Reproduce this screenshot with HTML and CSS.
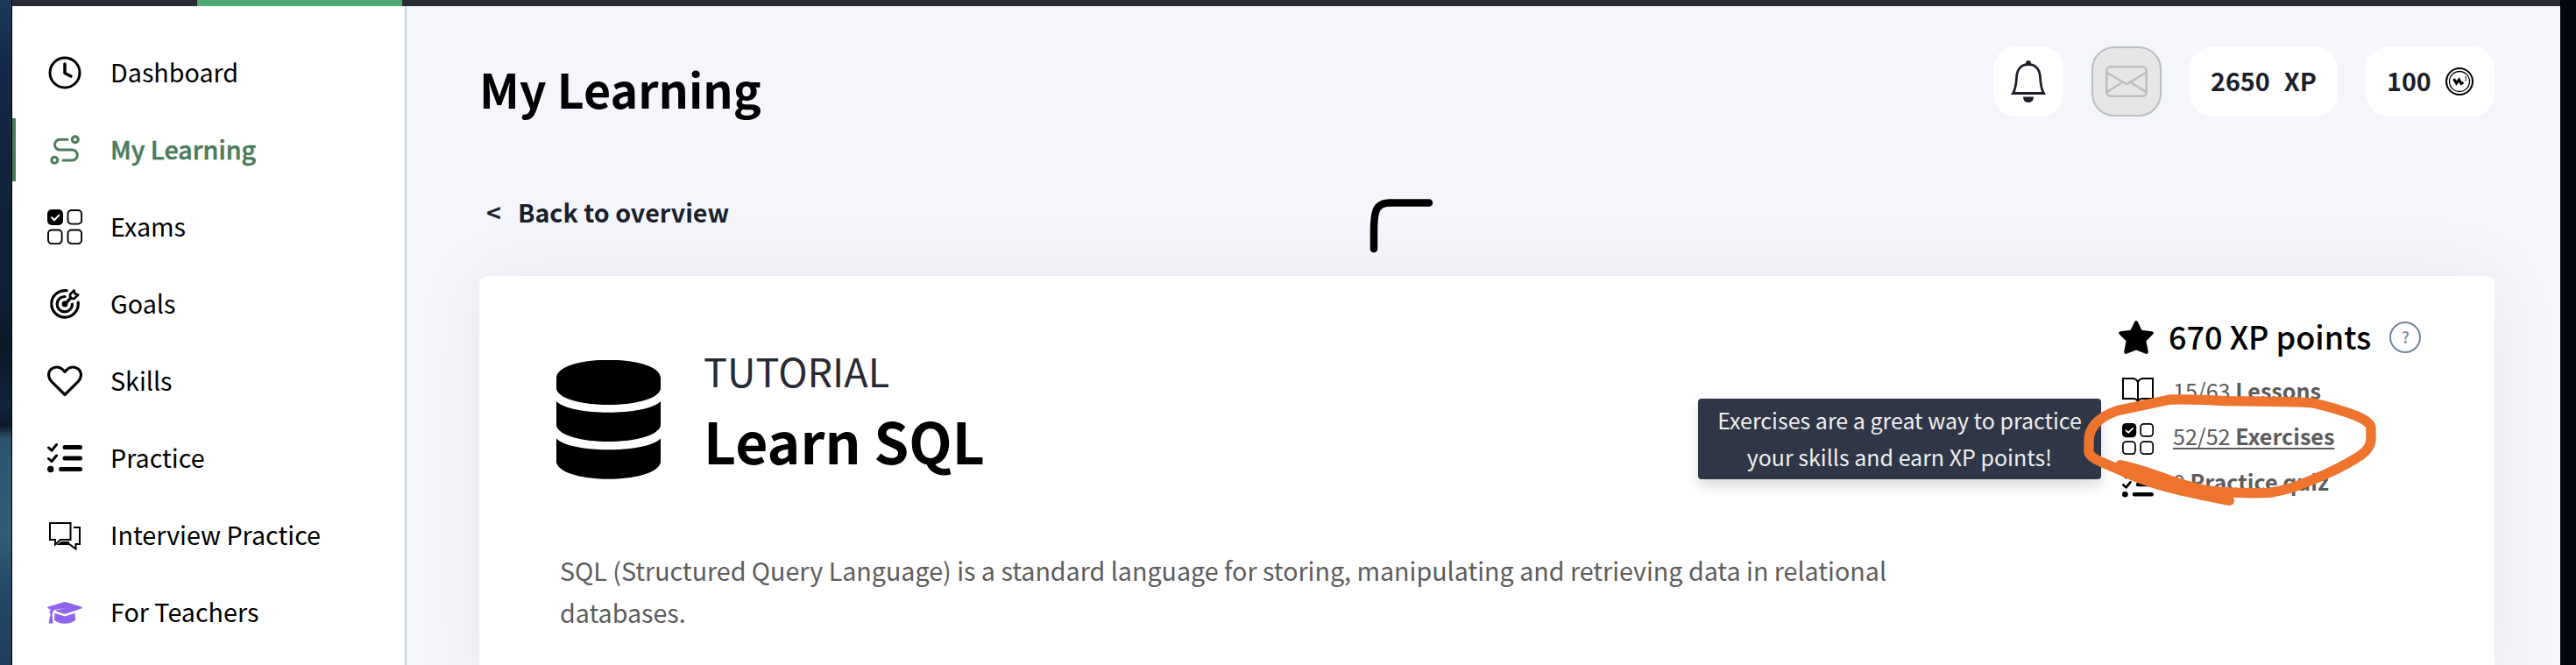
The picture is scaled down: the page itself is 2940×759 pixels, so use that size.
FILE: index.html
```html
<!DOCTYPE html>
<html lang="en">
<head>
<meta charset="utf-8">
<title>My Learning</title>
<link rel="stylesheet" href="styles.css">
</head>
<body>
<svg class="symbols" aria-hidden="true">
  <symbol id="i-grid" viewBox="0 0 40 40">
    <rect x="0" y="0" width="18" height="18" rx="5" fill="#000"/>
    <path d="M5 9.200l3 3 5.400-5.600" fill="none" stroke="#fff" stroke-width="2" stroke-linecap="round" stroke-linejoin="round"/>
    <g fill="none" stroke="#000" stroke-width="1.900">
      <rect x="23.500" y="1" width="15.600" height="15.600" rx="4"/>
      <rect x="1" y="23.500" width="15.600" height="15.600" rx="4"/>
      <rect x="23.500" y="23.500" width="15.600" height="15.600" rx="4"/>
    </g>
  </symbol>
  <symbol id="i-list" viewBox="0 0 40 40">
    <g fill="none" stroke="#000" stroke-linecap="round" stroke-linejoin="round">
      <path d="M1.500 8l3.500 3.200 5.500-6.700M1.500 20.500l3.500 3.200 5.500-6.700" stroke-width="3"/>
      <path d="M20 7.500h17.500M20 20h17.500M15.500 32.500h22" stroke-width="5"/>
    </g>
    <circle cx="3.700" cy="32.500" r="3.700"/>
  </symbol>
</svg>
<div class="wallpaper wallpaper-left"></div>
<div class="window">
  <div class="progress"><span class="progress-done"></span></div>
  <div class="app">
    <nav class="sidebar">
      <a class="nav-item">
        <svg class="icon" viewBox="0 0 40 40" fill="none" stroke="#000" stroke-width="3"><circle cx="20" cy="20" r="17"/><path d="M20 10v10.500l7 3.500" stroke-width="3.500" stroke-linecap="round" stroke-linejoin="round"/></svg>
        <span>Dashboard</span></a>
      <a class="nav-item active">
        <svg class="icon" viewBox="0 0 40 40" fill="none" stroke="#4a7c59" stroke-width="3" stroke-linecap="round"><circle cx="31.800" cy="8.300" r="3.500"/><circle cx="8.300" cy="31.800" r="3.500"/><path d="M23 8.300h-8.600a5.900 5.900 0 0 0 0 11.800h14a5.900 5.900 0 0 1 0 11.800H18"/></svg>
        <span>My Learning</span></a>
      <a class="nav-item"><svg class="icon"><use href="#i-grid"/></svg><span>Exams</span></a>
      <a class="nav-item">
        <svg class="icon" viewBox="0 0 40 40" fill="none" stroke="#000" stroke-width="3.200" stroke-linecap="round" stroke-linejoin="round"><path d="M22 4.700A15.300 15.300 0 1 0 35.200 18"/><path d="M20 11.500a8.700 8.700 0 1 0 8.500 8.500"/><path d="M20 20l7-7"/><circle cx="20" cy="20" r="1.800" fill="#000"/><path d="M26 13.500V9l4.500-4.500 1.200 4 3.500 1L30.500 14z" stroke-width="2.600"/></svg>
        <span>Goals</span></a>
      <a class="nav-item">
        <svg class="icon" viewBox="0 0 40 40" fill="none" stroke="#000" stroke-width="3.200" stroke-linejoin="round"><path d="M20 35.500L4.700 20.300C.5 16 .6 9.500 4.500 6.300c4-3.400 9.800-2.900 13.300.7L20 9.300 22.200 7c3.500-3.600 9.300-4.100 13.300-.7 3.900 3.200 4 9.700-.2 14z"/></svg>
        <span>Skills</span></a>
      <a class="nav-item"><svg class="icon"><use href="#i-list"/></svg><span>Practice</span></a>
      <a class="nav-item">
        <svg class="icon" viewBox="0 0 40 40" fill="none" stroke="#000" stroke-width="2"><path d="M3 6h23.500v19H15L9 30.500V25H3z"/><path d="M30 11h7v19h-4.500v5.500L25 30H13.500l3-2H25"/></svg>
        <span>Interview Practice</span></a>
      <a class="nav-item">
        <svg class="icon" viewBox="0 0 40 40" fill="#9065ed"><path d="M18.500 8.300q1.500-.6 3 0l17.300 5.300q2.400 1 0 2l-17.300 5.900q-1.500.5-3 0L8.800 18.300c3-1.300 6.700-1.800 11.200-2.700-5.500.2-10 1-13.500 2.500v2l-1 2 1 10.300H1.500L3.500 22 2.500 20l1.200-3-2.500-1.400q-2.400-1 0-2z"/><path d="M8.500 20.800l10 3.300q1.500.5 3 0l10-3.300.6 8q-5 4-12.100 4t-12.100-4z"/></svg>
        <span>For Teachers</span></a>
    </nav>
    <main class="main">
      <header class="header">
        <h1>My Learning</h1>
        <div class="badges">
          <div class="badge square">
            <svg width="80" height="80" viewBox="0 0 80 80"><g fill="none" stroke="#1a1f2b" stroke-width="2.800"><path d="M22.500 53.500c3-5.500 3.500-9 4-18C27 25 33 20.500 40 20.500S53 25 53.500 35.500c.5 9 1 12.500 4 18z"/></g><circle cx="40" cy="18.800" r="2.900" fill="#1a1f2b"/><path d="M34 57.500h12q0 6.500-6 6.500t-6-6.500z" fill="#1a1f2b"/></svg>
          </div>
          <div class="badge square mail">
            <svg width="48" height="36" viewBox="0 0 48 36" fill="none" stroke="#b9bec1" stroke-width="2.600"><rect x="1.300" y="1.300" width="45.400" height="33.400" rx="4.500"/><path d="M2 8l22 13L46 8M2 30l17-11M46 30L29 19"/></svg>
          </div>
          <div class="badge xp"><span>2650</span><span>XP</span></div>
          <div class="badge coins"><span>100</span>
            <svg width="32" height="32" viewBox="0 0 32 32" fill="none" stroke="#000"><circle cx="16" cy="16" r="15" stroke-width="2"/><circle cx="16" cy="16" r="11.500" stroke-width="1.300"/><path d="M9.500 13l3 5 3-4 2.500 4.500 2.500-1.500" stroke-width="3"/><path d="M22 11h2l-1.200 1.600q1.800.4.600 1.900H22" stroke-width=".8"/></svg>
          </div>
        </div>
      </header>
      <a class="back"><span>&lt;</span><span>Back to overview</span></a>
      <section class="card">
        <div class="card-head">
          <svg class="db" viewBox="0 0 119 136"><path d="M0 20C2-7 117-7 119 20V33C113 57 6 57 0 33zM0 47c16 17 103 17 119 0v28c-7 24-112 24-119 0zM0 89.500c16 17 103 17 119 0V117c-7 25-112 25-119 0z"/></svg>
          <div class="titles"><div class="kind">TUTORIAL</div><h2>Learn SQL</h2></div>
          <div class="stats">
            <div class="points">
              <svg width="40" height="38" viewBox="0 0 40 38"><path d="M18.200 1.200q1.800-2.400 3.600 0l4.600 9.600 11.500 1.400q3.200.8 1.300 3.200l-7.800 7.900 2.400 12q.1 3.400-2.900 2.500L20 33.400 9.100 37.800q-3 .9-2.900-2.500l2.400-12L.8 15.400q-1.900-2.400 1.300-3.200l11.500-1.400z"/></svg>
              <span class="points-text">670 XP points</span><span class="help">?</span>
            </div>
            <div class="stat"><svg class="sicon" viewBox="0 0 36 36" fill="none" stroke="#000" stroke-width="2"><path d="M18 5q-2-4-6-4H1v23h12q3.500 0 5 3 1.500-3 5-3h12V1H24q-4 0-6 4v20"/></svg><span>15/63 <b>Lessons</b></span></div>
            <div class="stat"><svg class="sicon"><use href="#i-grid"/></svg><span class="hover">52/52 <b>Exercises</b></span></div>
            <div class="stat"><svg class="sicon"><use href="#i-list"/></svg><span>0 <b>Practice quiz</b></span></div>
            <div class="tooltip">Exercises are a great way to practice<br>your skills and earn XP points!</div>
          </div>
        </div>
        <p class="description">SQL (Structured Query Language) is a standard language for storing, manipulating and retrieving data in relational<br>databases.</p>
      </section>
    </main>
  </div>
</div>
<div class="wallpaper wallpaper-right"></div>
<svg class="overlay" viewBox="0 0 2940 759" fill="none" stroke-linecap="round" stroke-linejoin="round">
  <path d="M1568 284v-20C1568 240 1571 232 1585 231.500H1631" stroke="#000" stroke-width="8.500"/>
  <path transform="translate(2360 340) scale(.3333)" stroke="#ee742e" stroke-width="34" d="M180 572L220 582Q290 602 350 625Q410 645 470 658Q580 672 690 667Q755 658 815 632L880 605Q940 578 985 550Q1038 520 1038 485V445Q1038 425 985 403Q920 378 840 360Q800 355 540 353Q440 346 350 348L170 386Q72 420 72 490V525Q72 545 120 564L180 590Q260 628 350 650Q420 668 553 694"/>
</svg>
</body>
</html>
```
FILE: styles.css
```css
* { box-sizing: border-box; }
body {
  margin: 0;
  width: 2940px;
  height: 759px;
  overflow: hidden;
  display: flex;
  position: relative;
  font-family: "Noto Sans CJK SC", "Noto Sans", sans-serif;
  color: #000;
}
.symbols { position: absolute; width: 0; height: 0; }
.wallpaper-left {
  width: 14px;
  border-right: 1px solid #000;
  background: linear-gradient(#1b3a5c 0, #14294a 10%, #10233c 28%, #0e2036 45%, #0a1726 52%, #10243c 61%, #0c1828 64%, #2c5470 66%, #315d78 80%, #234766 90%, #1f3d5c);
}
.wallpaper-right { width: 18px; border-left: 1px solid #000; background: #02070d; }
.window { width: 2908px; display: flex; flex-direction: column; background: #f5f6fb; }
.progress { height: 7px; background: #282a35; padding-left: 211px; flex: none; }
.progress-done { display: block; width: 234px; height: 7px; background: #4fa773; }
.app { flex: 1; display: flex; min-height: 0; }
.sidebar {
  width: 450px;
  flex: none;
  background: #fff;
  border-right: 2px solid #c9d4df;
  padding-top: 40px;
  display: flex;
  flex-direction: column;
  gap: 16px;
  position: relative;
  z-index: 1;
}
.nav-item {
  height: 72px;
  flex: none;
  display: flex;
  align-items: center;
  gap: 32px;
  padding-left: 40px;
  font-size: 28.700px;
  line-height: 40px;
}
.nav-item span { margin-top: -2px; }
.active { border-left: 4px solid #4a7c59; padding-left: 36px; color: #4a7c59; font-weight: 500; -webkit-text-stroke: .5px #4a7c59; }
.icon { width: 40px; height: 40px; flex: none; }
.main { width: 2458px; height: 752px; overflow: hidden; padding: 46px 75px 0 83px; }
.header { display: flex; justify-content: space-between; height: 80px; }
h1 { margin: 0; font-size: 53.700px; line-height: 96px; font-weight: 700; }
.badges { display: flex; gap: 32px; color: #1a1f2b; }
.badge {
  height: 80px;
  border-radius: 26px;
  background: #fff;
  display: flex;
  align-items: center;
  font-size: 28.700px;
  line-height: 40px;
  font-weight: 700;
}
.badge span { margin-top: -2px; }
.square { width: 80px; justify-content: center; }
.mail { background: #e6e6e6; border: 2px solid #b9bec1; }
.xp { width: 169px; padding-left: 24px; gap: 16px; }
.coins { width: 147px; padding-left: 24px; gap: 16px; }
.back {
  display: flex;
  gap: 19px;
  margin-top: 89px;
  padding-left: 8px;
  height: 93px;
  font-size: 28.650px;
  line-height: 40px;
  font-weight: 700;
  color: #1a1f2b;
}
.card {
  height: 480px;
  border-radius: 10px;
  background: #fff;
  box-shadow: 0 0 80px rgba(40, 50, 90, .07);
  padding: 0 0 0 88px;
}
.card-head { display: flex; height: 304px; position: relative; }
.db { width: 119px; height: 136px; margin-top: 96px; }
.titles { margin: 73px 0 0 49px; flex: 1; }
.kind { font-size: 45px; line-height: 70px; color: #282a35; }
h2 { margin: 0; font-size: 64.200px; line-height: 88px; font-weight: 700; }
.stats { width: 429px; padding-top: 44px; }
.points { display: flex; align-items: center; height: 52px; font-size: 36px; line-height: 52px; font-weight: 500; gap: 17px; margin-bottom: 12px; }
.points-text { margin: -4px 4px 0 0; }
.help { width: 36px; height: 36px; border: 2px solid #7585a0; border-radius: 50%; color: #7585a0; font-size: 18px; line-height: 30px; text-align: center; font-weight: 500; }
.stat { display: flex; align-items: center; height: 52px; padding-left: 4px; gap: 22px; color: #5c5c5c; font-size: 25.100px; line-height: 40px; }
.stat span { margin-top: -9px; }
.sicon { width: 36px; height: 36px; }
.hover { text-decoration: underline; text-decoration-thickness: 2px; text-underline-offset: 3px; }
.tooltip {
  position: absolute;
  left: 1303px;
  top: 140px;
  width: 460px;
  height: 92px;
  border-radius: 4px;
  background: #2f3647;
  color: #eee;
  padding-top: 3px;
  text-align: center;
  white-space: nowrap;
  font-size: 25px;
  line-height: 42px;
  box-shadow: 0 8px 16px rgba(0, 0, 0, .14);
}
.description { margin: 8px 0 0 4px; color: #5c5c5c; font-size: 28.650px; line-height: 48px; white-space: nowrap; }
.overlay { position: absolute; inset: 0; width: 2940px; height: 759px; z-index: 2; }
```
